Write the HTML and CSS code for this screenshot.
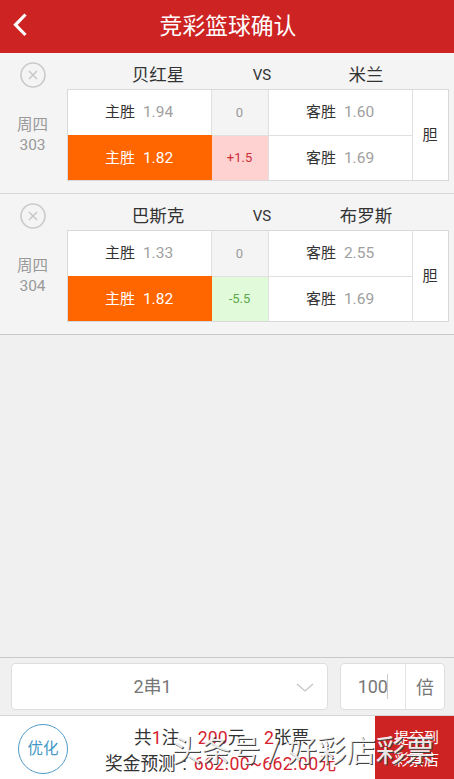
FILE: index.html
```html
<!DOCTYPE html>
<html lang="zh-CN">
<head>
<meta charset="utf-8">
<title>竞彩篮球确认</title>
<link rel="stylesheet" href="styles.css">
</head>
<body>
<div class="app">
  <header class="header">
    <svg class="back" width="16" height="26" viewBox="0 0 16 26"><path d="M13.5 2.5 3.5 12.8 13.5 23" fill="none" stroke="#fff" stroke-width="3.2"/></svg>
    <h1>竞彩篮球确认</h1>
  </header>
  <main class="matches">
    <section class="match">
      <div class="side">
        <svg class="remove" width="26" height="26" viewBox="0 0 26 26"><circle cx="13" cy="13" r="12" /><path d="M9 9l8 8M17 9l-8 8"/></svg>
        <div class="num">周四<br>303</div>
      </div>
      <div class="body">
        <div class="teams"><span>贝红星</span><span class="vs">VS</span><span>米兰</span></div>
        <div class="odds">
          <div class="cell"><span>主胜</span><b>1.94</b></div>
          <div class="cell zero">0</div>
          <div class="cell"><span>客胜</span><b>1.60</b></div>
          <div class="cell dan">胆</div>
          <div class="cell low picked"><span>主胜</span><b>1.82</b></div>
          <div class="cell low plus">+1.5</div>
          <div class="cell low"><span>客胜</span><b>1.69</b></div>
        </div>
      </div>
    </section>
    <section class="match">
      <div class="side">
        <svg class="remove" width="26" height="26" viewBox="0 0 26 26"><circle cx="13" cy="13" r="12" /><path d="M9 9l8 8M17 9l-8 8"/></svg>
        <div class="num">周四<br>304</div>
      </div>
      <div class="body">
        <div class="teams"><span>巴斯克</span><span class="vs">VS</span><span>布罗斯</span></div>
        <div class="odds">
          <div class="cell"><span>主胜</span><b>1.33</b></div>
          <div class="cell zero">0</div>
          <div class="cell"><span>客胜</span><b>2.55</b></div>
          <div class="cell dan">胆</div>
          <div class="cell low picked"><span>主胜</span><b>1.82</b></div>
          <div class="cell low minus">-5.5</div>
          <div class="cell low"><span>客胜</span><b>1.69</b></div>
        </div>
      </div>
    </section>
  </main>
  <div class="options">
    <div class="select">2串1
      <svg class="chevron" width="18" height="10" viewBox="0 0 18 10"><path d="M1 1l8 7 8-7" fill="none" stroke="#c4c4c4" stroke-width="1.3"/></svg>
    </div>
    <div class="times"><div class="value">100<i class="caret"></i></div><div class="unit">倍</div></div>
  </div>
  <footer class="footer">
    <div class="optimize">优化</div>
    <div class="summary">
      <div class="line counts"><span>共<em>1</em>注</span><span><em>200</em>元</span><span><em>2</em>张票</span></div>
      <div class="line prize"><span>奖金预测</span><span class="colon">:</span><em>662.00~662.00元</em></div>
    </div>
    <div class="submit">提交到<br>彩票店</div>
    <div class="watermark">头条号 / 好彩店彩票</div>
  </footer>
</div>
</body>
</html>
```
FILE: styles.css
```css
* { box-sizing: border-box; }
body {
  margin: 0;
  font-family: Roboto, "Noto Sans CJK SC", sans-serif;
  color: #333;
  background: #f0f0f0;
}
.app { height: 779px; display: flex; flex-direction: column; overflow: hidden; }
.header {
  height: 53px;
  flex: none;
  display: flex;
  align-items: center;
  background: #cd2323;
  color: #fff;
}
.back { margin: 0 0 4px 12px; }
.header h1 {
  flex: 1;
  margin: 0 26px 0 0;
  font-size: 22.8px;
  font-weight: 400;
  line-height: 30px;
  text-align: center;
}
.matches { flex: 1; }
.match {
  height: 141px;
  display: flex;
  background: #f4f4f4;
  border-bottom: 1px solid #d8d8d8;
}
.match:last-child { border-bottom-color: #c8c8c8; }
.side {
  width: 67px;
  padding: 9px 2px 0 0;
  display: flex;
  flex-direction: column;
  align-items: center;
}
.remove { fill: none; stroke: #c9c9c9; stroke-width: 1.6; }
.num {
  margin-top: 27px;
  font-size: 15.5px;
  line-height: 20px;
  text-align: center;
  color: #999;
}
.teams {
  height: 36px;
  padding: 7px 0 0 39px;
  display: grid;
  grid-template-columns: 104px 104px 104px;
  text-align: center;
  font-size: 17.5px;
  line-height: 31px;
}
.teams .vs { font-size: 15px; }
.odds {
  width: 382px;
  height: 92px;
  display: grid;
  grid-template-columns: 144px 57px 144px 35px;
  grid-template-rows: 45px 45px;
  border: 1px solid #d9d9d9;
  background: #fff;
}
.cell {
  display: flex;
  align-items: center;
  justify-content: center;
  gap: 8px;
  padding: 0 1px 1px 0;
  border-right: 1px solid #e0e0e0;
  font-size: 15px;
  line-height: 20px;
}
.cell b { font-weight: 400; font-size: 15.5px; color: #a0a0a0; }
.low { border-top: 1px solid #e0e0e0; }
.dan { grid-column: 4; grid-row: 1 / 3; border-right: 0; }
.zero { background: #f4f4f4; color: #999; font-size: 13px; }
.picked { background: #ff6600; color: #fff; border-color: #ff6600; }
.picked b { color: #fff; }
.plus { background: #ffd2d2; color: #cd2f37; font-size: 13px; }
.minus { background: #e1fada; color: #5dab4b; font-size: 13px; }
.plus, .minus, .zero { padding-bottom: 0; }
.options {
  height: 58px;
  flex: none;
  display: flex;
  gap: 12px;
  padding: 5px 9px 6px 11px;
  border-top: 1px solid #c8c8c8;
}
.select, .times {
  height: 47px;
  background: #fff;
  border: 1px solid #dedede;
  border-radius: 4px;
  color: #777;
  font-size: 18px;
}
.select {
  width: 317px;
  display: flex;
  align-items: center;
  justify-content: center;
  position: relative;
  padding: 0 34px 3px 0;
}
.chevron { position: absolute; right: 13px; top: 19px; }
.times { width: 105px; display: flex; align-items: center; }
.value {
  width: 65px;
  height: 45px;
  display: flex;
  align-items: center;
  justify-content: flex-end;
  padding-right: 17px;
  border-right: 1px solid #e5e5e5;
}
.caret { width: 1px; height: 25px; margin-left: -1px; background: #ccc; }
.unit { flex: 1; padding-bottom: 2px; text-align: center; }
.footer {
  height: 64px;
  flex: none;
  display: flex;
  position: relative;
  background: #fff;
  border-top: 1px solid #d5d5d5;
}
.optimize {
  width: 50px;
  height: 50px;
  margin: 8px 0 0 18px;
  border: 1px solid #4f9bc9;
  border-radius: 50%;
  color: #4597c5;
  font-size: 15.5px;
  line-height: 49px;
  text-align: center;
}
.summary { width: 307px; padding: 9px 0 0 37px; white-space: nowrap; }
.line { display: flex; height: 26px; line-height: 26px; font-size: 17.7px; }
.line em { font-style: normal; color: #d5232f; }
.counts { padding-left: 29px; gap: 18.5px; }
.colon { width: 18px; text-align: center; }
.prize em { letter-spacing: .3px; }
.submit {
  width: 79px;
  padding: 11px 0 0 4px;
  background: #cd2323;
  color: #fff;
  font-size: 15px;
  line-height: 22px;
  text-align: center;
}
.watermark {
  position: absolute;
  left: 172px;
  top: 15px;
  font-size: 29.5px;
  font-weight: 400;
  line-height: 40px;
  white-space: nowrap;
  color: rgba(255, 255, 255, .9);
  text-shadow: 1px 1px 0 #444;
}
```
